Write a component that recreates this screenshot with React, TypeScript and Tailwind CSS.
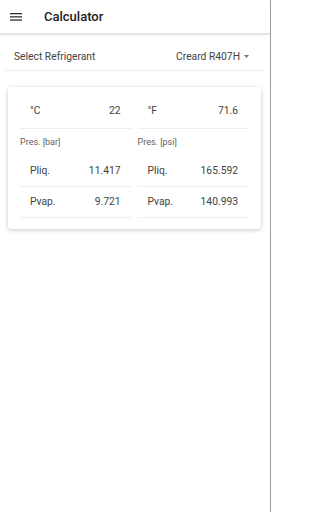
import React from "react";

const rows = [
  { label: "Pliq.", bar: "11.417", psi: "165.592" },
  { label: "Pvap.", bar: "9.721", psi: "140.993" },
];

function Column({ unit, temp, pres, values }: { unit: string; temp: string; pres: string; values: string[] }) {
  return (
    <div className="flex flex-1 flex-col">
      <div className="flex h-[42px] items-end justify-between border-b border-[#eeeeee] pb-[10px] pl-[10px] pr-[10px] text-[10.3px] text-[#424242]">
        <span>{unit}</span>
        <span>{temp}</span>
      </div>
      <div className="flex h-[27px] items-center text-[9px] text-[#616161]">{pres}</div>
      {rows.map((r, i) => (
        <div
          key={r.label}
          className="flex h-[31px] items-center justify-between border-b border-[#eeeeee] pl-[10px] pr-[10px] text-[10.3px] text-[#424242]"
        >
          <span>{r.label}</span>
          <span>{values[i]}</span>
        </div>
      ))}
    </div>
  );
}

export default function App() {
  return (
    <div className="h-[512px] w-[271px] border-r border-[#9e9e9e] bg-white" style={{ fontFamily: "Roboto, sans-serif" }}>
      {/* header */}
      <div className="flex h-[34px] items-center border-b border-[#e0e0e0] shadow-[0_1px_2px_rgba(0,0,0,0.12)]">
        <svg className="ml-[10px] h-[11px] w-[12px]" viewBox="0 0 12 11">
          <rect x="0" y="2" width="12" height="1.3" fill="#333" />
          <rect x="0" y="5.2" width="12" height="1.3" fill="#333" />
          <rect x="0" y="8.4" width="12" height="1.3" fill="#333" />
        </svg>
        <span className="ml-[22px] text-[13px] font-medium text-[#212121]">Calculator</span>
      </div>

      {/* refrigerant select */}
      <div className="ml-[4px] mr-[6px] flex h-[37px] items-center justify-between border-b border-[#eeeeee] pl-[10px] pr-[15px] pt-[9px] text-[10.3px] text-[#424242]">
        <span>Select Refrigerant</span>
        <span className="flex items-center gap-[4px]">
          Creard R407H
          <svg className="h-[3px] w-[5px]" viewBox="0 0 5 3">
            <path d="M0 0 L5 0 L2.5 3 Z" fill="#777" />
          </svg>
        </span>
      </div>

      {/* card */}
      <div className="ml-[8px] mr-[9px] mt-[16px] rounded-[3px] bg-white pb-[11px] pl-[12px] pr-[13px] shadow-[0_1px_4px_rgba(0,0,0,0.22)]">
        <div className="flex gap-[7px]">
          <Column unit="°C" temp="22" pres="Pres. [bar]" values={rows.map((r) => r.bar)} />
          <Column unit="°F" temp="71.6" pres="Pres. [psi]" values={rows.map((r) => r.psi)} />
        </div>
      </div>
    </div>
  );
}
